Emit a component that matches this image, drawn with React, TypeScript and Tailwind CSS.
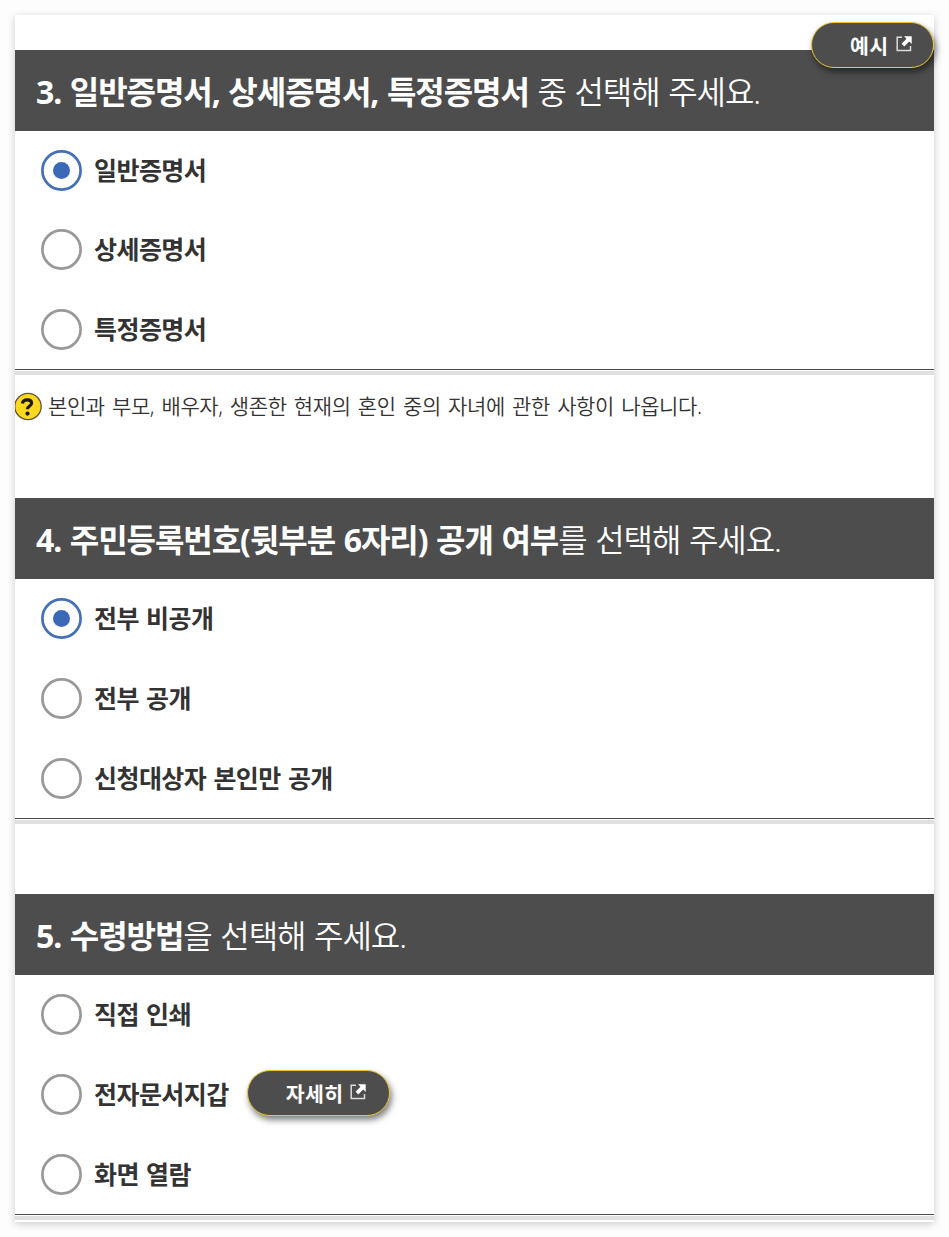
import { useState } from "react";
import type { ReactNode } from "react";

function ExternalIcon() {
  return (
    <svg width="16" height="16" viewBox="0 0 16 16" fill="none" className="relative -top-[2px] shrink-0">
      <path d="M6 1.2H1.2V14.5H14.5V10" stroke="#dcdcdc" strokeWidth="1.5" />
      <path d="M8 0.3H15.7V8L13.2 5.5L8.3 10.4L5.6 7.7L10.5 2.8Z" fill="#fff" />
    </svg>
  );
}

function HelpIcon() {
  return (
    <svg width="28" height="29" viewBox="0 0 28 29" fill="none" className="shrink-0">
      <circle cx="13" cy="14.5" r="13.2" fill="#fdd81f" stroke="#5d5638" strokeWidth="1.3" />
      <path
        d="M7.4 11.4C7.8 8.9 10 7.9 12.4 7.9C15.2 7.9 16.6 9.2 16.6 11.2C16.6 14 12.4 14 12.4 17.2"
        stroke="#1c1a12"
        strokeWidth="3.2"
      />
      <circle cx="12.5" cy="21.6" r="2.1" fill="#1c1a12" />
    </svg>
  );
}

function PillButton({ children, className }: { children: ReactNode; className: string }) {
  return (
    <button
      type="button"
      className={`flex h-[46px] items-center rounded-full border border-[#eac92f] bg-[#4d4d4d] pt-[2px] pl-[38px] text-[20.5px] leading-none font-bold text-white shadow-[2px_4px_6px_rgba(0,0,0,0.5)] ${className}`}
    >
      {children}
    </button>
  );
}

interface Option {
  label: string;
  extra?: ReactNode;
}

interface QuestionProps {
  title: ReactNode;
  name: string;
  options: Option[];
  initial?: number;
  bodyHeight?: string;
}

function Question({ title, name, options, initial = -1, bodyHeight = "h-[239px]" }: QuestionProps) {
  const [selected, setSelected] = useState(initial);

  return (
    <section>
      <h2 className="flex h-[81px] items-center bg-[#4d4d4d] pt-[3px] pl-[21px] text-[32px] font-[350] tracking-[-1.05px] whitespace-nowrap text-white">
        <span className="[word-spacing:1.3px]">{title}</span>
      </h2>
      <div className={`flex flex-col ${bodyHeight}`}>
        {options.map((option, i) => (
          <div key={option.label} className="flex flex-1 items-center pl-[26px]">
            <label className="flex cursor-pointer items-center">
              <input
                type="radio"
                name={name}
                checked={selected === i}
                onChange={() => setSelected(i)}
                className="sr-only"
              />
              <svg width="41" height="41" viewBox="0 0 41 41" fill="none" className="shrink-0">
                <circle cx="20.5" cy="20.5" r="19.1" stroke={selected === i ? "#4470b7" : "#999"} strokeWidth="2.7" />
                {selected === i && <circle cx="20.5" cy="20.5" r="8.5" fill="#3b69b7" />}
              </svg>
              <span className="ml-3 text-[25px] leading-none font-bold tracking-[-0.55px] whitespace-nowrap text-[#333] [word-spacing:1.2px]">
                {option.label}
              </span>
            </label>
            {option.extra}
          </div>
        ))}
      </div>
      <div className="h-px bg-[#4d4d4d]" />
      <div className="mt-px h-1 bg-[#e0e0e0]" />
    </section>
  );
}

export default function App() {
  return (
    <div className="h-[1237px] w-[949px] bg-[#fdfdfd] px-[15px] pt-[15px] font-['Noto_Sans','Noto_Sans_CJK_KR',sans-serif]">
      <main className="relative h-[1207px] w-[919px] bg-white pt-[35px] shadow-[0_2px_8px_rgba(0,0,0,0.2)]">
        <div className="absolute top-[7px] right-0">
          <PillButton className="w-[123px]">
            <span className="mr-[7px] tracking-[0.4px]">예시</span>
            <ExternalIcon />
          </PillButton>
        </div>

        <Question
          name="certificate"
          initial={0}
          bodyHeight="h-[238px]"
          title={
            <>
              <b className="font-bold">3. 일반증명서, 상세증명서, 특정증명서</b> 중 선택해 주세요.
            </>
          }
          options={[{ label: "일반증명서" }, { label: "상세증명서" }, { label: "특정증명서" }]}
        />
        <div className="flex h-[123px] pt-[17px]">
          <HelpIcon />
          <p className="ml-[5px] text-[21px] leading-[29px] font-[350] tracking-[-0.4px] whitespace-nowrap text-[#333] [word-spacing:2.2px]">
            본인과 부모, 배우자, 생존한 현재의 혼인 중의 자녀에 관한 사항이 나옵니다.
          </p>
        </div>

        <Question
          name="disclosure"
          initial={0}
          title={
            <>
              <b className="font-bold">4. 주민등록번호(뒷부분 6자리) 공개 여부</b>를 선택해 주세요.
            </>
          }
          options={[{ label: "전부 비공개" }, { label: "전부 공개" }, { label: "신청대상자 본인만 공개" }]}
        />
        <div className="h-[70px]" />

        <Question
          name="delivery"
          title={
            <>
              <b className="font-bold">5. 수령방법</b>을 선택해 주세요.
            </>
          }
          options={[
            { label: "직접 인쇄" },
            {
              label: "전자문서지갑",
              extra: (
                <PillButton className="mb-[3px] ml-[18px] w-[143px]">
                  <span className="mr-[7px] tracking-[0.4px]">자세히</span>
                  <ExternalIcon />
                </PillButton>
              ),
            },
            { label: "화면 열람" },
          ]}
        />
      </main>
    </div>
  );
}
